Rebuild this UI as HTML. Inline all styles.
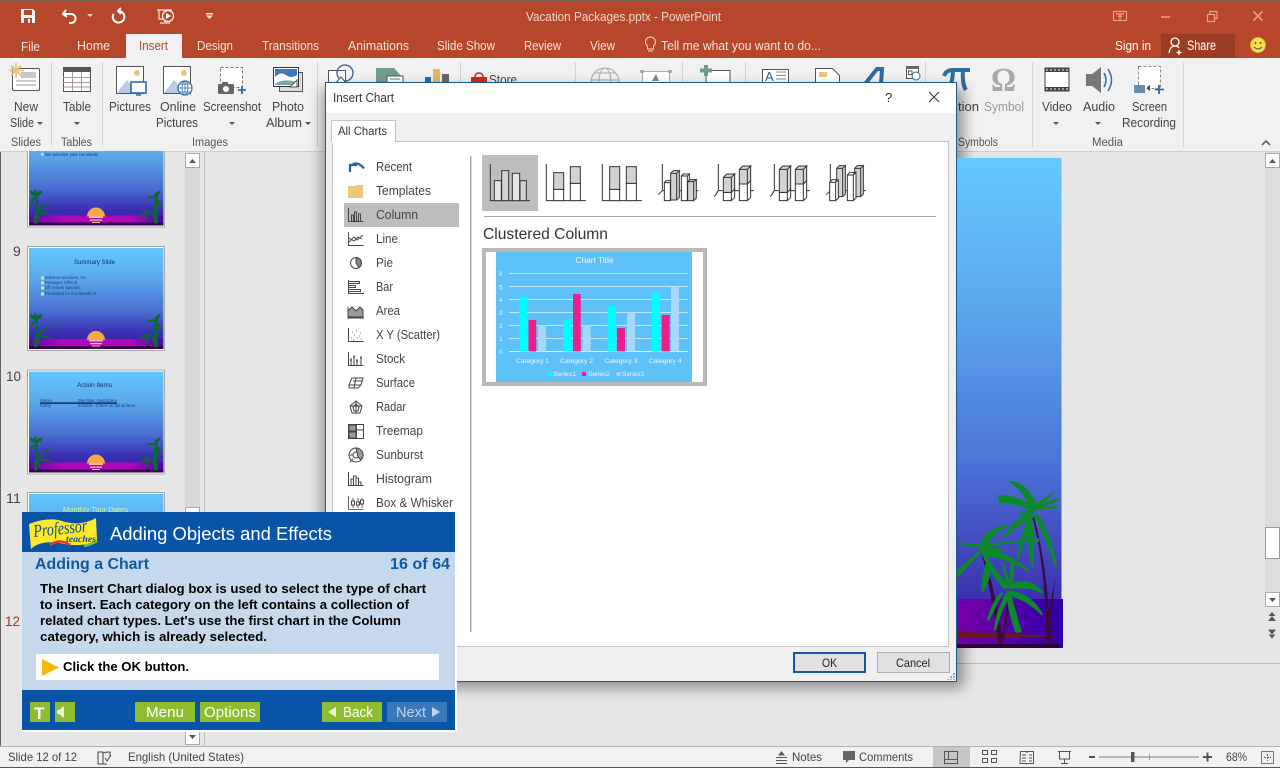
<!DOCTYPE html>
<html><head><meta charset="utf-8"><title>Vacation Packages.pptx - PowerPoint</title>
<style>
html,body{margin:0;padding:0;background:#e6e6e6;overflow:hidden}
svg{display:block}
text{font-family:"Liberation Sans",sans-serif;font-size:12.5px;fill:#444;white-space:pre}
.w{fill:#fff}.tab{fill:#f6e3dc;font-size:12.5px}
.rb{fill:#444;font-size:12.5px}.gp{fill:#555;font-size:11.5px}
.li{fill:#444;font-size:12.5px}
.st{fill:#444;font-size:12px}
.b{font-weight:bold}
.ic{fill:none;stroke:#444;stroke-width:1}
.ct{fill:#fff;stroke:#333;stroke-width:3}
.cg{fill:#d2d2d2;stroke:#333;stroke-width:3}
.cl{fill:none;stroke:#333;stroke-width:3}
.pl{fill:#e8f6ff;font-size:6.5px}
.br{fill:#163f8a;font-size:4.5px}
.pb{fill:#000;font-weight:bold;font-size:13px}
.nv{fill:#fff;font-size:15px}
</style></head><body>
<svg width="1280" height="768" viewBox="0 0 1280 768" xmlns="http://www.w3.org/2000/svg">
<defs>
<linearGradient id="sky" x1="0" y1="0" x2="0" y2="1"><stop offset="0" stop-color="#62c8ff"/><stop offset=".3" stop-color="#5ba8ec"/><stop offset=".62" stop-color="#4a70d2"/><stop offset=".85" stop-color="#3a2cb0"/><stop offset="1" stop-color="#3a1eaa"/></linearGradient>
<linearGradient id="bigsky" gradientUnits="userSpaceOnUse" x1="0" y1="158" x2="0" y2="647"><stop offset="0" stop-color="#62c8ff"/><stop offset=".3" stop-color="#5ca8ee"/><stop offset=".62" stop-color="#4b74d6"/><stop offset=".9" stop-color="#3c30b0"/><stop offset="1" stop-color="#3a20aa"/></linearGradient>
<linearGradient id="band" x1="0" y1="0" x2="1" y2="0"><stop offset="0" stop-color="#7a00a8"/><stop offset="1" stop-color="#3000a8"/></linearGradient>
<linearGradient id="tband" x1="0" y1="0" x2="1" y2="0"><stop offset="0" stop-color="#5a0aa8"/><stop offset=".25" stop-color="#b008b8"/><stop offset=".75" stop-color="#b008b8"/><stop offset="1" stop-color="#3a10a0"/></linearGradient>
<filter id="sh" x="-10%" y="-10%" width="120%" height="120%"><feGaussianBlur stdDeviation="7"/></filter>
<g id="thumb">
<rect x="-1.5" y="-1.5" width="137" height="104" fill="#fff" stroke="#a8a8a8"/>
<rect x="0" y="0" width="134.500" height="101" fill="url(#sky)"/>
<rect x="0" y="91" width="134.500" height="10" fill="url(#tband)"/>
<rect x="0" y="98" width="134.500" height="3" fill="#3a0050"/>
<path d="M58,92a9,9 0 0 1 18,0z" fill="#f4a848"/>
<path d="M60,92h14v1.500h-14zM61,95h12v1.300h-12zM63,97.500h8v1h-8z" fill="#f7c0a0"/>
<g fill="#0a6a30">
<path d="M5,99 Q8,80 5,65 L7,65 Q11,80 8,99z"/><path d="M7,72 Q0,70 1,66 Q6,67 8,71z M7,72 Q14,70 13,66 Q9,66 6,70z M7,72 L1,82 L3,74z M9,86 Q17,78 21,76 Q15,84 10,88z M10,88 Q18,86 22,90 Q15,89 10,90z M9,88 L3,96 Q5,90 9,86z M9,88 L12,98 L8,92z"/>
<path d="M125,99 Q123,82 127,70 L129,70 Q127,85 129,99z"/><path d="M127,72 Q120,70 117,74 Q123,73 127,74z M127,72 Q133,68 131,66 Q127,67 125,71z M127,74 L133,86 L131,76z M121,86 Q114,84 112,92 Q117,88 122,89z M121,87 L126,97 L124,90z M121,88 L116,98 Q116,92 120,86z"/>
</g>
</g>
</defs>

<!-- base -->
<rect width="1280" height="768" fill="#e6e6e6"/>
<rect x="0" y="0" width="1" height="768" fill="#666"/>
<!-- title bar -->
<rect width="1280" height="58" fill="#b7472a"/>
<rect width="1280" height="2" fill="#7b6154"/>
<rect x="126" y="34" width="56" height="25" fill="#f1f1f1"/>
<rect x="1161" y="34" width="74" height="24" fill="#9b3d24"/>

<!-- QAT -->
<path d="M21,9h12l2,2v12h-14z" fill="#fff"/><rect x="24" y="10" width="8" height="5" fill="#b7472a"/><rect x="24" y="18" width="8" height="5" fill="#b7472a"/><rect x="28" y="19" width="2" height="4" fill="#fff"/>
<path d="M66,10l-3,4 4,3M64,14h7a4.500,4.500 0 0 1 0,9h-2" fill="none" stroke="#fff" stroke-width="2"/>
<path d="M87,14h6l-3,3z" fill="#f3d8cf"/>
<path d="M118.500,11a5.800,5.800 0 1 1 -5,3M121,8l-3,3 3,3" fill="none" stroke="#fff" stroke-width="2"/>
<path d="M157,10h15M159,10v9h12M165,19v3M160,23h10" fill="none" stroke="#f6e3dc" stroke-width="1.200"/><circle cx="168" cy="16" r="5.500" fill="#b7472a" stroke="#fff" stroke-width="1.200"/><path d="M166,13l5,3-5,3z" fill="#fff"/>
<path d="M206,13h7v1.500h-7zM206,15.500h7l-3.500,3.500z" fill="#f6e3dc"/>
<text x="526" y="21" textLength="195" lengthAdjust="spacingAndGlyphs" style="fill:#f3d7cd;font-size:12.5px">Vacation Packages.pptx - PowerPoint</text>

<!-- window controls -->
<g fill="none" stroke="#eb9f8a" stroke-width="1.200">
<rect x="1113.500" y="11.500" width="13" height="9"/><path d="M1116,14h8M1120,20v-5M1118,17l2,-2 2,2"/>
<path d="M1161,17h9" stroke-width="1.500"/>
<rect x="1207.500" y="14.500" width="7" height="7"/><path d="M1210,14v-2.500h7v7h-2.500"/>
<path d="M1253.500,11.500l9,9M1262.500,11.500l-9,9" stroke-width="1.600"/>
</g>

<!-- tabs -->
<text class="tab" x="21" y="51" textLength="19" lengthAdjust="spacingAndGlyphs">File</text>
<text class="tab" x="77" y="50" textLength="33" lengthAdjust="spacingAndGlyphs">Home</text>
<text x="139" y="50" textLength="29" lengthAdjust="spacingAndGlyphs" style="fill:#b7472a">Insert</text>
<text class="tab" x="197" y="50" textLength="36" lengthAdjust="spacingAndGlyphs">Design</text>
<text class="tab" x="262" y="50" textLength="57" lengthAdjust="spacingAndGlyphs">Transitions</text>
<text class="tab" x="348" y="50" textLength="61" lengthAdjust="spacingAndGlyphs">Animations</text>
<text class="tab" x="437" y="50" textLength="58" lengthAdjust="spacingAndGlyphs">Slide Show</text>
<text class="tab" x="524" y="50" textLength="37" lengthAdjust="spacingAndGlyphs">Review</text>
<text class="tab" x="590" y="50" textLength="25" lengthAdjust="spacingAndGlyphs">View</text>
<path d="M647.500,46a5,5 0 1 1 6,0v3h-6zM648,51h5" fill="none" stroke="#f3d7cd"/>
<text class="tab" x="661" y="50" textLength="160" lengthAdjust="spacingAndGlyphs">Tell me what you want to do...</text>
<text class="tab" x="1115" y="50" textLength="36" lengthAdjust="spacingAndGlyphs" style="fill:#fff">Sign in</text>
<circle cx="1175" cy="42" r="4" fill="none" stroke="#fff" stroke-width="1.300"/><path d="M1169,53q1,-7 6,-7 3,0 4,2M1179,50v5M1176.500,52.500h5" fill="none" stroke="#fff" stroke-width="1.300"/>
<text class="tab" x="1187" y="50" textLength="29" lengthAdjust="spacingAndGlyphs" style="fill:#fff;font-size:13.5px">Share</text>
<circle cx="1258" cy="45" r="7.500" fill="#f8e04a" stroke="#d8b820"/><circle cx="1255.500" cy="43" r="1" fill="#555"/><circle cx="1260.500" cy="43" r="1" fill="#555"/><path d="M1254,47q4,4 8,0" fill="none" stroke="#555"/>

<!-- ribbon -->
<rect y="58" width="1280" height="93" fill="#f1f1f1"/>
<rect y="151" width="1280" height="1" fill="#cfcfcf"/>
<g fill="#d4d4d4"><rect x="51" y="62" width="1" height="85"/><rect x="102" y="62" width="1" height="85"/><rect x="317" y="62" width="1" height="85"/><rect x="460" y="62" width="1" height="20"/><rect x="575" y="62" width="1" height="20"/><rect x="682" y="62" width="1" height="20"/><rect x="745" y="62" width="1" height="20"/><rect x="925" y="62" width="1" height="20"/><rect x="1032" y="62" width="1" height="85"/><rect x="1183" y="62" width="1" height="85"/></g>

<!-- new slide -->
<rect x="12.500" y="68.500" width="27" height="22" rx="1" fill="#fff" stroke="#555"/><rect x="21" y="72" width="15" height="6" fill="#c8c8c8"/><path d="M16,81h20M16,85h20" stroke="#999"/>
<path d="M16,63v15M9,70.500h15M11,65.500l10,10M21,65.500l-10,10" stroke="#e7c77e" stroke-width="1.800"/>
<text class="rb" x="14" y="111" textLength="24" lengthAdjust="spacingAndGlyphs">New</text>
<text class="rb" x="10" y="127" textLength="24" lengthAdjust="spacingAndGlyphs">Slide</text><path d="M37,122h6l-3,3z" fill="#555"/>
<text class="gp" x="11" y="146" textLength="30" lengthAdjust="spacingAndGlyphs">Slides</text>
<!-- table -->
<rect x="63.500" y="67.500" width="27" height="24" fill="#fff" stroke="#555"/><rect x="63" y="67" width="28" height="5" fill="#555"/><path d="M63,77.500h27M63,82.500h27M63,87h27M72.500,72v19M81.500,72v19" stroke="#a99"/>
<text class="rb" x="63" y="111" textLength="28" lengthAdjust="spacingAndGlyphs">Table</text><path d="M74,122h6l-3,3z" fill="#555"/>
<text class="gp" x="61" y="146" textLength="31" lengthAdjust="spacingAndGlyphs">Tables</text>
<!-- pictures -->
<rect x="116.500" y="66.500" width="27" height="27" fill="#fff" stroke="#555"/><path d="M117,93l10,-13 9,11v2z" fill="#b7cbe4"/><circle cx="137" cy="73" r="3" fill="#e8c77a"/>
<rect x="131" y="82" width="15" height="11" fill="#fff" stroke="#2e6ca4" stroke-width="1.600"/><path d="M136,95h5" stroke="#2e6ca4" stroke-width="1.500"/>
<text class="rb" x="109" y="111" textLength="42" lengthAdjust="spacingAndGlyphs">Pictures</text>
<rect x="163.500" y="66.500" width="27" height="27" fill="#fff" stroke="#555"/><path d="M164,93l10,-13 8,9v4z" fill="#b7cbe4"/><circle cx="184" cy="73" r="3" fill="#e8c77a"/>
<circle cx="185" cy="88" r="7" fill="#fff" stroke="#2e6ca4" stroke-width="1.200"/><path d="M178,88h14M185,81v14M180,84h10M180,92h10" stroke="#2e6ca4" stroke-width=".8"/><ellipse cx="185" cy="88" rx="3" ry="7" fill="none" stroke="#2e6ca4" stroke-width=".8"/>
<text class="rb" x="160" y="111" textLength="36" lengthAdjust="spacingAndGlyphs">Online</text>
<text class="rb" x="156" y="127" textLength="42" lengthAdjust="spacingAndGlyphs">Pictures</text>
<!-- screenshot -->
<rect x="220.500" y="67.500" width="22" height="20" fill="#fff" stroke="#777" stroke-dasharray="3 2"/>
<rect x="218" y="84" width="16" height="10" rx="1" fill="#666"/><rect x="222" y="82" width="6" height="3" fill="#666"/><circle cx="226" cy="89" r="3" fill="#fff"/>
<path d="M242,86v8M238,90h8" stroke="#2e6ca4" stroke-width="1.800"/>
<text class="rb" x="203" y="111" textLength="58" lengthAdjust="spacingAndGlyphs">Screenshot</text><path d="M229,122h6l-3,3z" fill="#555"/>
<!-- album -->
<rect x="279.500" y="72.500" width="23" height="19" fill="#ddd" stroke="#555"/><rect x="273.500" y="67.500" width="25" height="19" fill="#fff" stroke="#333"/><rect x="275" y="69" width="22" height="8" fill="#3a7ab8"/><path d="M275,77q6,-6 11,-2t11,0v2z" fill="#fff"/><path d="M275,84q8,-6 22,-2v3h-22z" fill="#7aa"/><path d="M290,87l7,-7v7z" fill="#fff" stroke="#555"/>
<text class="rb" x="272" y="111" textLength="32" lengthAdjust="spacingAndGlyphs">Photo</text>
<text class="rb" x="266" y="127" textLength="36" lengthAdjust="spacingAndGlyphs">Album</text><path d="M305,122h6l-3,3z" fill="#555"/>
<text class="gp" x="192" y="146" textLength="36" lengthAdjust="spacingAndGlyphs">Images</text>

<!-- partially hidden ribbon icons -->
<rect x="328.500" y="70.500" width="17" height="14" fill="#fff" stroke="#555"/><circle cx="345" cy="73" r="8" fill="none" stroke="#2e5f8f" stroke-width="1.300"/><path d="M334,85l7,-8 6,7" fill="#fff" stroke="#555"/>
<path d="M376,68h18l8,9-8,8h-18z" fill="#6f9d8c"/><rect x="387" y="76" width="16" height="9" fill="#fff" stroke="#555"/><path d="M390,79h10" stroke="#777"/>
<rect x="425" y="77" width="6" height="8" fill="#2e6ca4"/><rect x="433" y="69" width="7" height="16" fill="#e2b85a"/><rect x="442" y="74" width="7" height="11" fill="#666"/>
<path d="M471,77h16v8h-16z" fill="#d02a18"/><path d="M475,77q0,-4 4,-4t4,4" fill="none" stroke="#d02a18" stroke-width="1.500"/>
<text class="rb" x="489" y="84" textLength="28" lengthAdjust="spacingAndGlyphs">Store</text>
<g fill="none" stroke="#a8a8a8"><circle cx="605" cy="82" r="14"/><ellipse cx="605" cy="82" rx="6" ry="14"/><path d="M591,80h28M594,73h22"/></g>
<rect x="642.500" y="71.500" width="27" height="15" fill="#fff" stroke="#aaa"/><path d="M656,74l3,7h-7z" fill="#888"/><path d="M647,82h18l-9,4z" fill="#999"/><rect x="640" y="70" width="4" height="3" fill="#aaa"/><rect x="668" y="70" width="4" height="3" fill="#aaa"/>
<rect x="706" y="70.500" width="24" height="14" fill="#fff" stroke="#555"/><path d="M706,65v11M700,70.500h12" stroke="#6f9d8c" stroke-width="4"/>
<rect x="762.500" y="69.500" width="26" height="13" fill="#fff" stroke="#555"/><text x="765" y="81" style="fill:#2e5f8f;font-size:13px">A</text><path d="M776,72h10M776,75.500h10M776,79h10" stroke="#888"/>
<path d="M815.500,68.500h17l7,7v8h-24z" fill="#fff" stroke="#555"/><rect x="819" y="72" width="8" height="5" fill="#e8c77a"/>
<path d="M865,84l12,-15h5l-1,15" fill="none" stroke="#2e6ca4" stroke-width="4"/>
<rect x="906.500" y="66.500" width="12" height="12" fill="#fff" stroke="#555"/><rect x="906" y="66" width="13" height="3" fill="#666"/><rect x="908.500" y="71" width="3.500" height="3.500" fill="none" stroke="#555"/><circle cx="916" cy="76" r="4" fill="#fff" stroke="#2e6ca4"/>
<path d="M944,76q2,-6 9,-6h17M953,70q0,12 -5,20M963,70q-1,14 3,20" fill="none" stroke="#2e6ca4" stroke-width="4"/>
<text x="991" y="91" style="font-family:'Liberation Serif',serif;font-size:34px;font-weight:bold;fill:#a8a8a8" textLength="25" lengthAdjust="spacingAndGlyphs">Ω</text>
<text class="rb" x="958" y="111" textLength="21" lengthAdjust="spacingAndGlyphs">tion</text>
<text class="rb" x="984" y="111" textLength="40" lengthAdjust="spacingAndGlyphs" style="fill:#999">Symbol</text>
<text class="gp" x="958" y="146" textLength="40" lengthAdjust="spacingAndGlyphs">Symbols</text>
<!-- video -->
<rect x="1045" y="68" width="24" height="23" fill="#fff" stroke="#444"/><rect x="1045" y="68" width="24" height="4" fill="#444"/><rect x="1045" y="87" width="24" height="4" fill="#444"/><path d="M1046,70h22M1046,89h22" stroke="#fff" stroke-dasharray="2 2" stroke-width="1"/>
<text class="rb" x="1042" y="111" textLength="30" lengthAdjust="spacingAndGlyphs">Video</text><path d="M1053,122h6l-3,3z" fill="#555"/>
<!-- audio -->
<path d="M1086,74h6l9,-7v26l-9,-7h-6z" fill="#777"/><path d="M1104,73q4,7 0,14M1108,69q7,11 0,22" fill="none" stroke="#2e6ca4" stroke-width="1.500"/>
<text class="rb" x="1083" y="111" textLength="32" lengthAdjust="spacingAndGlyphs">Audio</text><path d="M1095,122h6l-3,3z" fill="#555"/>
<!-- screen rec -->
<rect x="1138.500" y="66.500" width="22" height="22" fill="#fff" stroke="#888" stroke-dasharray="3 2"/>
<rect x="1134" y="85" width="11" height="8" fill="#6a8cab"/><path d="M1147,87l3,-2v6l-3,-2zM1153,88h2" fill="#555"/><path d="M1159,85v9M1155,89.500h9" stroke="#2e6ca4" stroke-width="1.800"/>
<text class="rb" x="1132" y="111" textLength="35" lengthAdjust="spacingAndGlyphs">Screen</text>
<text class="rb" x="1122" y="127" textLength="54" lengthAdjust="spacingAndGlyphs">Recording</text>
<text class="gp" x="1092" y="146" textLength="31" lengthAdjust="spacingAndGlyphs">Media</text>
<path d="M1262,145l4,-4 4,4" fill="none" stroke="#555" stroke-width="1.500"/>

<!-- left thumbnails -->
<rect x="185" y="153" width="15" height="592" fill="#d9d9d9"/>
<rect x="204" y="152" width="1" height="594" fill="#bdbdbd"/>
<rect x="185.500" y="153.500" width="14" height="14" fill="#fff" stroke="#aaa"/><path d="M189,163h7l-3.500,-4z" fill="#555"/>
<rect x="185.500" y="507.500" width="14" height="14" fill="#fff" stroke="#aaa"/>
<rect x="185.500" y="730.500" width="14" height="14" fill="#fff" stroke="#aaa"/><path d="M189,735h7l-3.500,4z" fill="#555"/>
<svg x="26" y="151" width="140" height="78" viewBox="26 151 140 78" overflow="hidden"><use href="#thumb" transform="translate(29,124.500)"/></svg>
<text x="45" y="156" style="fill:#10306a;font-size:4.500px" textLength="53" lengthAdjust="spacingAndGlyphs">We welcome your comments</text>
<rect x="41" y="153" width="2.500" height="2.500" fill="#c8f08a"/>
<use href="#thumb" transform="translate(29,248)"/>
<text x="74" y="264" style="fill:#10306a;font-size:6.500px" textLength="41" lengthAdjust="spacingAndGlyphs">Summary Slide</text>
<g style="fill:#10306a"><text class="br" x="45" y="279" textLength="42" lengthAdjust="spacingAndGlyphs">Bahama Vacations, Inc.</text><text class="br" x="45" y="284" textLength="32" lengthAdjust="spacingAndGlyphs">Packages Offered</text><text class="br" x="45" y="289" textLength="35" lengthAdjust="spacingAndGlyphs">Off Season Specials</text><text class="br" x="45" y="295" textLength="52" lengthAdjust="spacingAndGlyphs">Presented for the Benefit of:</text></g>
<path d="M41,276.500h3v3h-3zM41,281.500h3v3h-3zM41,286.500h3v3h-3zM41,292.500h3v3h-3z" fill="#c8f08a"/>
<use href="#thumb" transform="translate(29,371.500)"/>
<text x="77" y="387" style="fill:#10306a;font-size:6.500px" textLength="35" lengthAdjust="spacingAndGlyphs">Action Items</text>
<text class="br" x="40" y="402" textLength="12" lengthAdjust="spacingAndGlyphs">Owner</text><text class="br" x="78" y="402" textLength="39" lengthAdjust="spacingAndGlyphs">Due Date  Description</text>
<rect x="40" y="402.500" width="77" height="1.200" fill="#0a1040"/>
<text class="br" x="40" y="407" textLength="11" lengthAdjust="spacingAndGlyphs">Kathy</text><text class="br" x="78" y="407" textLength="57" lengthAdjust="spacingAndGlyphs">8/31/09 - Check on fall airfares</text>
<svg x="26" y="490" width="140" height="30" viewBox="26 490 140 30" overflow="hidden"><use href="#thumb" transform="translate(29,494)"/></svg>
<text x="63" y="512" style="fill:#c8f8a0;font-size:7px" textLength="65" lengthAdjust="spacingAndGlyphs">Monthly Tour Dates</text>
<text x="13" y="256" style="fill:#444;font-size:14px">9</text>
<text x="6" y="381" style="fill:#444;font-size:14px" textLength="15" lengthAdjust="spacingAndGlyphs">10</text>
<text x="6" y="503" style="fill:#444;font-size:14px" textLength="15" lengthAdjust="spacingAndGlyphs">11</text>
<text x="5" y="626" style="fill:#a8341f;font-size:14px" textLength="15" lengthAdjust="spacingAndGlyphs">12</text>

<!-- horizontal rule + dialog shadow (below slide) -->
<rect x="957" y="663" width="323" height="1" fill="#bbb"/>
<rect x="322" y="88" width="642" height="600" fill="#000" opacity=".38" filter="url(#sh)"/>

<!-- main slide -->
<rect x="950" y="158" width="111.500" height="489.500" fill="url(#bigsky)"/>
<rect x="950" y="599" width="113" height="49" fill="url(#band)"/>
<rect x="950" y="644" width="110" height="4" fill="#300038"/>
<g transform="translate(950,460) scale(.33333)">
<path d="M24,516Q170,518 320,530Q170,535 24,533Z" fill="#6b1a1a"/>
<g fill="#3c0a40">
<path d="M250,165Q290,300 304,550L290,550Q285,300 246,170Z"/>
<path d="M100,280Q138,400 160,550L145,550Q125,400 96,285Z"/>
<path d="M175,420Q160,480 155,540L162,540Q172,480 180,420Z"/>
<path d="M318,350Q300,450 305,550L295,550Q295,440 318,350Z"/>
</g>
<g fill="#0c8a2a" stroke="#0c8a2a" stroke-width="6" stroke-linejoin="round">
<path d="M180,65Q235,70 262,148L240,145Q225,90 180,65Z"/>
<path d="M148,108Q215,110 250,150Q200,128 148,125Z"/>
<path d="M248,140Q280,115 312,98Q285,125 260,148Z" stroke-width="2"/><path d="M258,145Q290,125 325,115L325,122Q290,135 262,150Z" stroke-width="2"/><path d="M258,148L322,137L322,144Z" stroke-width="2"/>
<path d="M245,165Q190,175 165,232Q195,195 250,170Z"/>
<path d="M245,150Q225,150 210,165L250,155Z"/>
<path d="M240,170Q215,220 203,295Q225,230 245,180Z"/><path d="M235,180Q232,240 248,320Q250,240 243,175Z"/>
<path d="M255,170Q285,220 318,320Q300,220 262,165Z"/>
<path d="M90,260Q110,205 170,197Q120,225 105,262Z"/>
<path d="M100,255L265,238L265,243Q170,240 95,265Z"/>
<path d="M28,250L100,258L100,265Z"/><path d="M95,270L24,348L24,332Z"/>
<path d="M95,265Q160,270 235,332Q190,300 110,285Z"/><path d="M100,262L155,270L110,275Z"/>
<path d="M95,270Q130,330 175,380L165,385Q115,330 95,270Z"/><path d="M110,310Q95,360 98,392Q120,360 118,320Z"/>
<path d="M178,380Q230,345 277,398Q240,375 180,385Z"/><path d="M175,395Q240,400 275,462Q240,425 175,400Z"/>
<path d="M178,395L212,515L198,515Q175,450 172,395Z"/><path d="M175,395Q140,450 135,510Q150,455 180,400Z"/><path d="M155,400L115,480Q125,430 155,400Z"/>
<path d="M180,370L185,310L190,310Q190,350 185,380Z"/><path d="M170,370L160,310Q165,340 178,370Z"/>
</g>
</g>

<!-- right scrollbar -->
<rect x="1265" y="152" width="15" height="455" fill="#dcdcdc"/>
<rect x="1265.500" y="153.500" width="14" height="14" fill="#fff" stroke="#aaa"/><path d="M1269,163h7l-3.500,-4z" fill="#555"/>
<rect x="1265.500" y="527.500" width="14" height="31" fill="#fff" stroke="#999"/>
<rect x="1265.500" y="592.500" width="14" height="14" fill="#fff" stroke="#aaa"/><path d="M1269,598h7l-3.500,4z" fill="#555"/>
<path d="M1268.500,616h7l-3.500,-4zM1268.500,620.500h7l-3.500,-4.500zM1268.500,630h7l-3.500,4.500zM1268.500,634.500h7l-3.500,4z" fill="#555"/><path d="M1268,620.500h8M1268,630h8" stroke="#555" stroke-width=".8"/>

<!-- dialog -->
<rect x="325.500" y="82.500" width="631" height="599" fill="#f0f0f0" stroke="#1c5a8c"/>
<rect x="326" y="83" width="630" height="30" fill="#fff"/>
<text x="333" y="102" textLength="61" lengthAdjust="spacingAndGlyphs" style="fill:#333;font-size:12.5px">Insert Chart</text>
<text x="885" y="102" style="fill:#333;font-size:13px">?</text>
<path d="M929,92l10,10M939,92l-10,10" stroke="#333" fill="none"/>
<rect x="332.500" y="141.500" width="616" height="505" fill="#fff" stroke="#c4c4c4"/>
<path d="M331.500,142V120.500H395.500V142" fill="#fff" stroke="#c4c4c4"/><rect x="332" y="140" width="63" height="3" fill="#fff"/>
<text x="338" y="135" textLength="49" lengthAdjust="spacingAndGlyphs" style="fill:#333;font-size:12px">All Charts</text>

<!-- list -->
<rect x="344" y="203" width="115" height="24" fill="#bdbdbd"/>
<rect x="470" y="156" width="1.500" height="476" fill="#a8a8a8"/>
<text class="li" x="376" y="171" textLength="36" lengthAdjust="spacingAndGlyphs">Recent</text>
<text class="li" x="376" y="195" textLength="55" lengthAdjust="spacingAndGlyphs">Templates</text>
<text class="li" x="376" y="219" textLength="42" lengthAdjust="spacingAndGlyphs">Column</text>
<text class="li" x="376" y="243" textLength="22" lengthAdjust="spacingAndGlyphs">Line</text>
<text class="li" x="376" y="267" textLength="17" lengthAdjust="spacingAndGlyphs">Pie</text>
<text class="li" x="376" y="291" textLength="17" lengthAdjust="spacingAndGlyphs">Bar</text>
<text class="li" x="376" y="315" textLength="24" lengthAdjust="spacingAndGlyphs">Area</text>
<text class="li" x="376" y="339" textLength="64" lengthAdjust="spacingAndGlyphs">X Y (Scatter)</text>
<text class="li" x="376" y="363" textLength="29" lengthAdjust="spacingAndGlyphs">Stock</text>
<text class="li" x="376" y="387" textLength="39" lengthAdjust="spacingAndGlyphs">Surface</text>
<text class="li" x="376" y="411" textLength="30" lengthAdjust="spacingAndGlyphs">Radar</text>
<text class="li" x="376" y="435" textLength="47" lengthAdjust="spacingAndGlyphs">Treemap</text>
<text class="li" x="376" y="459" textLength="47" lengthAdjust="spacingAndGlyphs">Sunburst</text>
<text class="li" x="376" y="483" textLength="56" lengthAdjust="spacingAndGlyphs">Histogram</text>
<text class="li" x="376" y="507" textLength="77" lengthAdjust="spacingAndGlyphs">Box &amp; Whisker</text>

<!-- list icons -->
<path d="M350,172v-7h7M351,165.500q7,-5 13,3" fill="none" stroke="#2e5f9f" stroke-width="2.200"/>
<path d="M348,186h7l1,-1h7v13h-15z" fill="#eec57a"/>
<g fill="none" stroke="#444">
<path d="M348.500,208v13.500h15M351.500,221v-6h2v6M354.500,221v-9h2v9M358.500,221v-7h2v7"/>
<path d="M348.500,232v13.500h15M349,242l5,-5 3,3 6,-5M349,238l5,3 4,-4 4,2" stroke-width=".9"/>
<circle cx="356" cy="263" r="5.500"/><path d="M356,263v-5.500a5.500,5.500 0 0 1 3,10z" fill="#888"/>
<path d="M348.500,280v14M348.500,281.500h11v2h-11M348.500,285.500h7v2h-7M348.500,289.500h12v2h-12M348,293.500h16" stroke-width=".9"/>
<path d="M348,311l4,-4 4,4 4,-4 3,3v7h-15z" fill="#9a9a9a"/><path d="M348,307v11h16"/>
<path d="M348.500,328v13.500h15"/>
<path d="M351,338h1M354,335h1M357,338h1M360,333h1M352,332h1M356,331h1M359,336h1M353,340h1M361,339h1" stroke="#777"/>
<path d="M348.500,352v13.500h15M351,365v-7M354,365v-10M357,365v-6M361,365v-9M350,360h2M353,357h2M356,361h2M360,358h2"/>
<path d="M349,385l3,-7h11l-2,7 -3,3h-9zM349,385h12M352,378l-3,7M353,381h9M356,378l-2,10"/>
<path d="M356,401l6,5 -2,7h-8l-2,-7zM356,404l3,3 -1,4h-4l-1,-4zM356,401v13M350,406l12,0"/>
<rect x="348.500" y="424.500" width="15" height="14"/><rect x="349" y="425" width="7" height="6" fill="#9a9a9a"/><rect x="349" y="432" width="7" height="6" fill="#9a9a9a"/><path d="M356.500,424v14M356.500,430h7"/>
<circle cx="356" cy="455" r="7"/><circle cx="356" cy="455" r="3"/><path d="M356,448a7,7 0 0 1 5,12l-3,-3z" fill="#999"/><path d="M349,455h4M353,459l-3,3"/>
<path d="M348.500,472v13.500h15M351,485v-6h2.500v6M353.500,485v-9h2.500v9M356,485v-7h2.500v7M358.500,485v-3h2.500v3"/>
<path d="M348.500,496v13.500h15M353,498v10M358,498v10M362,498v10" stroke-width=".8"/>
<path d="M351.500,501h3v4h-3zM356.500,502h3v3h-3zM360.500,500h3v4h-3z" fill="#fff"/>
</g>

<!-- chart type row -->
<rect x="482" y="155" width="56" height="56" fill="#bdbdbd"/>
<rect x="484" y="216" width="452" height="1" fill="#a5a5a5"/>
<g transform="translate(480,150) scale(.33333)">
<path class="cl" d="M31,42V152H150"/><rect class="ct" x="43" y="92" width="21" height="60" style="fill:#e6e6e6"/><rect class="cg" x="65" y="62" width="21" height="90"/><rect class="ct" x="97" y="70" width="22" height="82" style="fill:#e6e6e6"/><rect class="cg" x="120" y="92" width="19" height="60"/>
<path class="cl" d="M199,42V152H318"/><rect class="ct" x="221" y="118" width="30" height="34"/><rect class="cg" x="221" y="68" width="30" height="50"/><rect class="ct" x="271" y="100" width="30" height="52"/><rect class="cg" x="271" y="50" width="30" height="50"/>
<path class="cl" d="M367,42V152H486"/><rect class="ct" x="389" y="118" width="30" height="34"/><rect class="cg" x="389" y="50" width="30" height="68"/><rect class="ct" x="439" y="100" width="30" height="52"/><rect class="cg" x="439" y="50" width="30" height="50"/>
<path class="cl" d="M547,42V122L535,134M547,122H655"/>
<path class="ct" d="M553,98h18v54h-18zM553,98l6,-6h18l-6,6M571,98l6,-6v54l-6,6"/>
<path class="cg" d="M572,70h18v80h-18zM572,70l8,-8h18l-8,8M590,70l8,-8v80l-8,8"/>
<path class="ct" d="M604,78h18v74h-18zM604,78l6,-6h18l-6,6M622,78l6,-6v74l-6,6"/>
<path class="cg" d="M623,95h18v57h-18zM623,95l6,-6h20l-8,6M641,95l8,-6v55l-8,8"/>
<path class="cl" d="M715,42V122L703,140M715,122H822"/>
<path class="ct" d="M730,127h24v25h-24zM754,127l10,-10v25l-10,10"/><path class="cg" d="M730,82h24v45h-24zM730,82l10,-10h24l-10,10M754,82l10,-10v45l-10,10"/>
<path class="ct" d="M778,102h24v50h-24zM802,102l10,-10v50l-10,10"/><path class="cg" d="M778,58h24v44h-24zM778,58l10,-10h24l-10,10M802,58l10,-10v44l-10,10"/>
<path class="cl" d="M883,42V122L871,140M883,122H990"/>
<path class="ct" d="M898,127h24v25h-24zM922,127l10,-10v25l-10,10"/><path class="cg" d="M898,58h24v69h-24zM898,58l10,-10h24l-10,10M922,58l10,-10v69l-10,10"/>
<path class="ct" d="M946,102h24v50h-24zM970,102l10,-10v50l-10,10"/><path class="cg" d="M946,58h24v44h-24zM946,58l10,-10h24l-10,10M970,58l10,-10v44l-10,10"/>
<path class="cl" d="M1051,42V122L1039,134M1051,122H1158"/>
<path class="cg" d="M1070,55h18v85h-18zM1070,55l8,-8h18l-8,8M1088,55l8,-8v85l-8,8"/>
<path class="ct" d="M1049,97h18v55h-18zM1049,97l8,-8h12l-2,8M1067,97l8,-8v55l-8,8"/>
<path class="cg" d="M1124,55h18v85h-18zM1124,55l8,-8h18l-8,8M1142,55l8,-8v85l-8,8"/>
<path class="ct" d="M1102,75h18v77h-18zM1102,75l8,-8h14l-4,8M1120,75l8,-8v77l-8,8"/>
</g>
<text x="483" y="239" textLength="125" lengthAdjust="spacingAndGlyphs" style="fill:#333;font-size:16px">Clustered Column</text>

<!-- preview -->
<rect x="484" y="250" width="221" height="134" fill="#fff" stroke="#b8b8b8" stroke-width="4"/>
<rect x="496" y="252" width="196" height="130" fill="#5ec2f8"/>
<g stroke="#bfe8ff"><path d="M509,273.500h179M509,286.500h179M509,299.500h179M509,312.500h179M509,325.500h179M509,338.500h179"/><path d="M509,351.500h179" stroke="#dff4ff"/></g>
<g fill="#00ffff"><rect x="519.300" y="296.700" width="8" height="54.800"/><rect x="563" y="320" width="8" height="31.500"/><rect x="607.700" y="306" width="8" height="45.500"/><rect x="652" y="292.700" width="8" height="58.800"/></g>
<g fill="#e8208c"><rect x="528.500" y="320" width="7.700" height="31.500"/><rect x="573" y="294" width="7.700" height="57.500"/><rect x="617" y="328" width="8" height="23.500"/><rect x="661.700" y="315" width="8" height="36.500"/></g>
<g fill="#a8d8f8"><rect x="538" y="325" width="8" height="26.500"/><rect x="582.700" y="325" width="8" height="26.500"/><rect x="627" y="312.500" width="8" height="39"/><rect x="671" y="286.700" width="8" height="64.800"/></g>
<text class="pl" x="575.500" y="263" textLength="38" lengthAdjust="spacingAndGlyphs" style="font-size:8px">Chart Title</text>
<text class="pl" x="499" y="276">6</text><text class="pl" x="499" y="289.500">5</text><text class="pl" x="499" y="302">4</text><text class="pl" x="499" y="315">3</text><text class="pl" x="499" y="328">2</text><text class="pl" x="499" y="341">1</text><text class="pl" x="499" y="354">0</text>
<text class="pl" x="516" y="363" textLength="33" lengthAdjust="spacingAndGlyphs">Category 1</text><text class="pl" x="560" y="363" textLength="33" lengthAdjust="spacingAndGlyphs">Category 2</text><text class="pl" x="604.500" y="363" textLength="33" lengthAdjust="spacingAndGlyphs">Category 3</text><text class="pl" x="648.500" y="363" textLength="33" lengthAdjust="spacingAndGlyphs">Category 4</text>
<rect x="547.500" y="372" width="4" height="4" fill="#00ffff"/><rect x="582" y="372" width="4" height="4" fill="#e8208c"/><rect x="616.500" y="372" width="4" height="4" fill="#a8d8f8"/>
<text class="pl" x="553" y="376" textLength="23" lengthAdjust="spacingAndGlyphs">Series1</text><text class="pl" x="588" y="376" textLength="22" lengthAdjust="spacingAndGlyphs">Series2</text><text class="pl" x="622" y="376" textLength="22" lengthAdjust="spacingAndGlyphs">Series3</text>

<!-- dialog buttons -->
<rect x="794" y="653" width="71" height="19" fill="#e1e1e1" stroke="#1557a5" stroke-width="2"/>
<text x="822" y="667" textLength="15" lengthAdjust="spacingAndGlyphs" style="fill:#222;font-size:12px">OK</text>
<rect x="877.500" y="652.500" width="72" height="20" fill="#e1e1e1" stroke="#adadad"/>
<text x="896" y="667" textLength="34" lengthAdjust="spacingAndGlyphs" style="fill:#222;font-size:12px">Cancel</text>
<path d="M953,673h2v2h-2zM950,676h2v2h-2zM953,676h2v2h-2zM947,679h2v1h-2zM950,679h2v1h-2zM953,679h2v1h-2z" fill="#aaa"/>

<!-- tutorial panel -->
<rect x="22" y="512" width="435" height="220" fill="#fff"/>
<rect x="22" y="512" width="433" height="40" fill="#0a54a8"/>
<rect x="22" y="552" width="433" height="138" fill="#c6d9ec"/>
<rect x="22" y="690" width="433" height="40" fill="#0a54a8"/>
<path d="M29,524Q50,516 65,522Q82,526 96,518L97,541Q80,548 60,543Q40,540 31,549Z" fill="#fde92c"/>
<path d="M50,545Q60,538 70,545" stroke="#e23a30" stroke-width="2.500" fill="none"/><path d="M84,546Q92,544 97,541" stroke="#7cc040" stroke-width="2.500" fill="none"/>
<text x="34" y="537" textLength="54" lengthAdjust="spacingAndGlyphs" transform="rotate(-6 34 537)" style="font-family:'Liberation Serif',serif;font-style:italic;font-size:18px;fill:#114a96">Professor</text>
<text x="66" y="542" textLength="30" lengthAdjust="spacingAndGlyphs" style="font-family:'Liberation Serif',serif;font-style:italic;font-weight:bold;font-size:9px;fill:#114a96">teaches</text>
<text x="110" y="540" textLength="222" lengthAdjust="spacingAndGlyphs" style="fill:#fff;font-size:18.500px">Adding Objects and Effects</text>
<text x="35" y="569" textLength="114" lengthAdjust="spacingAndGlyphs" class="b" style="fill:#12589c;font-size:16px">Adding a Chart</text>
<text x="390" y="569" textLength="60" lengthAdjust="spacingAndGlyphs" class="b" style="fill:#12589c;font-size:16px">16 of 64</text>
<text class="pb" x="40" y="593" textLength="386" lengthAdjust="spacingAndGlyphs">The Insert Chart dialog box is used to select the type of chart</text>
<text class="pb" x="40" y="609" textLength="369" lengthAdjust="spacingAndGlyphs">to insert. Each category on the left contains a collection of</text>
<text class="pb" x="40" y="625" textLength="361" lengthAdjust="spacingAndGlyphs">related chart types. Let's use the first chart in the Column</text>
<text class="pb" x="40" y="641" textLength="227" lengthAdjust="spacingAndGlyphs">category, which is already selected.</text>
<rect x="36" y="654" width="403" height="26" fill="#fff"/>
<path d="M42,659l17,8.500 -17,8.500z" fill="#f6b810"/>
<text class="pb" x="63" y="671" textLength="126" lengthAdjust="spacingAndGlyphs">Click the OK button.</text>
<g fill="#8ebe30"><rect x="30" y="702" width="20" height="20"/><rect x="55" y="702" width="20" height="20"/><rect x="135" y="702" width="60" height="20"/><rect x="200" y="702" width="60" height="20"/><rect x="322" y="702" width="60" height="20"/></g>
<rect x="387" y="702" width="60" height="20" fill="#3a78b8"/>
<text x="34" y="719" class="b" style="fill:#fff;font-size:17px">T</text>
<path d="M57,710h2l5,-4v12l-5,-4h-2z" fill="#e8f0e0"/>
<text class="nv" x="146" y="717" textLength="38" lengthAdjust="spacingAndGlyphs">Menu</text>
<text class="nv" x="204" y="717" textLength="52" lengthAdjust="spacingAndGlyphs">Options</text>
<path d="M328,712l8,-5v10z" fill="#e8f0e0"/>
<text class="nv" x="343" y="717" textLength="30" lengthAdjust="spacingAndGlyphs">Back</text>
<text x="396" y="717" textLength="30" lengthAdjust="spacingAndGlyphs" style="fill:#bcd4ea;font-size:15px">Next</text>
<path d="M432,707l8,5 -8,5z" fill="#bcd4ea"/>

<!-- status bar -->
<rect y="746" width="1280" height="1" fill="#b2b2b2"/>
<rect y="747" width="1280" height="20" fill="#f1f1f1"/>
<rect y="767" width="1280" height="1" fill="#555"/>
<rect x="933" y="747" width="37" height="20" fill="#c6c6c6"/>
<text class="st" x="8" y="761" textLength="69" lengthAdjust="spacingAndGlyphs">Slide 12 of 12</text>
<path d="M98,752h5v12h-5zM103,753q2,-1 7,-1v4M103,758v6h4M105,758l2,3 4,-6" class="ic"/>
<text class="st" x="128" y="761" textLength="116" lengthAdjust="spacingAndGlyphs">English (United States)</text>
<path d="M776,757.500h11M776,760.500h11M776,763.500h11" stroke="#555"/><path d="M778,755.500l3.500,-4.500 3.500,4.500z" fill="#555"/>
<text class="st" x="792" y="761" textLength="30" lengthAdjust="spacingAndGlyphs">Notes</text>
<path d="M843,751h12v9h-6l-3,3v-3h-3z" fill="#666"/>
<text class="st" x="859" y="761" textLength="54" lengthAdjust="spacingAndGlyphs">Comments</text>
<g class="ic" style="stroke:#555">
<path d="M944.500,751.500h13v12h-13zM948.500,751.500v8h9M944.500,759.500h13"/>
<path d="M982.500,750.500h5v4h-5zM991.500,750.500h5v4h-5zM982.500,758.500h5v4h-5zM991.500,758.500h5v4h-5z"/>
<path d="M1020.500,751.500h6l.5,1 .5,-1h6v12h-6.500l-.5,.5 -.5,-.5h-6zM1022,755h4M1022,758h4M1022,761h4M1029,755h3M1029,758h3M1029,761h3"/>
<path d="M1058,751.500h13M1059.500,752v7h10v-7M1064.500,759v4M1061,763.500h7"/>
</g>
<path d="M1089,757h6" stroke="#555" stroke-width="2"/>
<path d="M1099,757h100" stroke="#777"/><path d="M1149.500,754v6" stroke="#999"/>
<rect x="1131" y="752" width="3.500" height="10" fill="#555"/>
<path d="M1203,757h9M1207.500,752.500v9" stroke="#555" stroke-width="2"/>
<text class="st" x="1226" y="761" textLength="21" lengthAdjust="spacingAndGlyphs">68%</text>
<rect x="1261.500" y="751.500" width="12" height="12" fill="#eee" stroke="#777"/><path d="M1264,757.500h7M1267.500,754v7" stroke="#666" stroke-dasharray="2 1"/>
</svg>
</body></html>
